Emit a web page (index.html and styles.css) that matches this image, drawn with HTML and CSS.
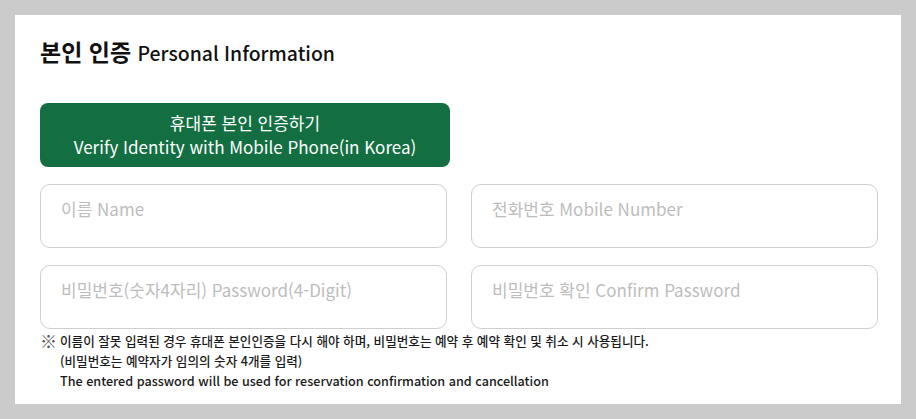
FILE: index.html
```html
<!DOCTYPE html>
<html lang="ko">
<head>
<meta charset="utf-8">
<link rel="stylesheet" href="styles.css">
</head>
<body>
<div class="panel">
  <h2 class="title"><span class="ko">본인 인증</span> <span class="en">Personal Information</span></h2>
  <button class="verify" type="button">
    <span>휴대폰 본인 인증하기</span>
    <span>Verify Identity with Mobile Phone(in Korea)</span>
  </button>
  <div class="fields">
    <input class="field" type="text" placeholder="이름 Name">
    <input class="field" type="text" placeholder="전화번호 Mobile Number">
    <input class="field" type="password" placeholder="비밀번호(숫자4자리) Password(4-Digit)">
    <input class="field" type="password" placeholder="비밀번호 확인 Confirm Password">
  </div>
  <div class="note">
    <span class="mark">※</span>
    <div class="note-text">
      <p>이름이 잘못 입력된 경우 휴대폰 본인인증을 다시 해야 하며, 비밀번호는 예약 후 예약 확인 및 취소 시 사용됩니다.</p>
      <p>(비밀번호는 예약자가 임의의 숫자 4개를 입력)</p>
      <p>The entered password will be used for reservation confirmation and cancellation</p>
    </div>
  </div>
</div>
</body>
</html>
```

FILE: styles.css
```css
* { box-sizing: border-box; }
html, body { margin: 0; }
body {
  background: #cbcbcb;
  padding: 15px 15px 0 15px;
  font-family: "Noto Sans CJK KR", "Noto Sans", sans-serif;
  color: #111;
}
.panel {
  background: #fff;
  padding: 24px 24px 14px 25px;
  height: 389px;
}
.title {
  margin: 0;
  line-height: 24px;
  font-weight: 700;
  font-size: 23px;
  color: #111;
}
.title .en {
  font-size: 19.4px;
  font-weight: 500;
}
.verify {
  display: flex;
  flex-direction: column;
  align-items: center;
  width: 410px;
  height: 64px;
  margin-top: 38px;
  padding: 8px 0 0 0;
  border: none;
  border-radius: 8px;
  background: #136f42;
  color: #fff;
  font-family: inherit;
  font-size: 17px;
  line-height: 24px;
  font-weight: 400;
}
.fields {
  display: grid;
  grid-template-columns: 407px 407px;
  column-gap: 24px;
  row-gap: 17px;
  margin-top: 17px;
}
.field {
  height: 64px;
  border: 1px solid #cfcfcf;
  border-radius: 10px;
  padding: 11px 20px 27px 20px;
  font-family: inherit;
  font-size: 17px;
  line-height: 24px;
  background: #fff;
  outline: none;
}
.field::placeholder { color: #bdbdbd; }
.note {
  display: flex;
  margin-top: 2px;
  font-size: 12.6px;
  line-height: 20px;
  font-weight: 500;
  color: #1a1a1a;
}
.mark {
  width: 20px;
  flex: none;
  font-size: 17px;
  font-weight: 300;
  color: #555;
  line-height: 20px;
}
.note-text p { margin: 0; }
```
